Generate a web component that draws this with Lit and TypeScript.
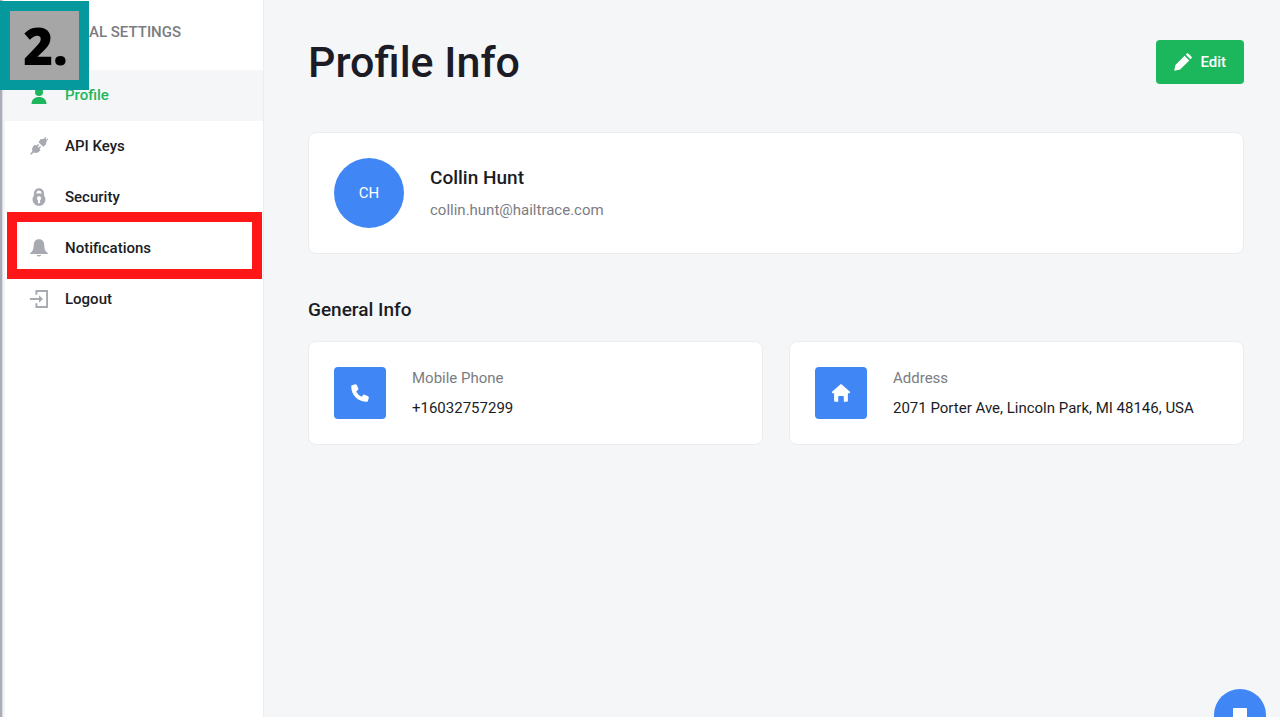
import { LitElement, html, svg, css } from "lit";
import { customElement } from "lit/decorators.js";
import { classMap } from "lit/directives/class-map.js";

const icons = {
  person: svg`<circle cx="9" cy="6" r="4"/><path d="M1.5 18C1.5 13.500 4.9 11 9 11s7.500 2.500 7.500 7z"/>`,
  plug: svg`<path d="M8.600 5.200 L10.300 2.300 L13.400 1.900 L14.200 1.300 L15.600 0 L16.300 0.700 L15.500 2.100 L16.700 2.400 L17.500 1.200 L18 2 L16.600 4.300 L15.900 7.600 L13.200 9.800z"/><path d="M4.800 7.800 L6.600 8.600 L8.200 7 L9.200 8 L7.700 9.600 L8.600 10.500 L10.100 9 L11.100 10 L9.500 11.500 L10.400 13 L8.600 15.300 L5.700 16 L3.700 15.400 L1.300 17.800 L0.200 16.800 L2.400 14.300 L2 12.200 L2.900 9.500z"/>`,
  lock: svg`<path fill-rule="evenodd" d="M3.900 7.400V5.300a5.100 5.100 0 0 1 10.200 0V7.400A6.500 6.500 0 1 1 3.900 7.400zM6.500 5.700a7 7 0 0 1 5 0V5a2.500 2.500 0 0 0-5 0zM9 8.300a2 2 0 0 0-1.100 3.700V15.300h2.200V12A2 2 0 0 0 9 8.300z"/>`,
  bell: svg`<path d="M9 .2c3.700 0 5.200 2.700 5.300 6 .1 3.700.5 5.700 3.500 7.700v1H.2v-1c3-2 3.400-4 3.500-7.700C3.800 2.900 5.300.2 9 .2zM6.700 15.900h4.600A2.400 2.400 0 0 1 6.700 15.900z"/>`,
  logout: svg`<path d="M5.400 4.800V0H18V18H5.400v-4.800h2v2.900h8.700V1.900H7.400v2.900zM0 8.100h9V5.300L13 9l-4 3.700V9.900H0z"/>`,
  pencil: svg`<path d="M.2 17.800l1.200-5.900L10.600 2.700l4.700 4.700-9.200 9.200zM11.700 1.600l.9-.9q1-1 2 0l2.700 2.700q1 1 0 2l-.9.900z"/>`,
  phone: svg`<path d="M1 1.200L4.300.2q1-.2 1.500.7l1.500 3.500q.3.900-.4 1.500L5.200 7.400q1.900 3.700 5.400 5.400l1.500-1.800q.6-.7 1.500-.3l3.500 1.500q.9.500.7 1.500l-.9 3.200q-.3.900-1.200.9C6.800 17.800.2 11.200.2 2.300q0-.9.800-1.100z"/>`,
  home: svg`<path d="M9.700.4l8 7.200q.5.600.2 1.200-.2.500-1 .5h-1V16.500q0 1.200-1.200 1.200h-2.900V12.700q0-.8-.8-.8H7q-.8 0-.8.800v5H3.300q-1.200 0-1.200-1.200V9.300h-1q-.8 0-1-.5-.3-.6.200-1.200l8-7.200q.7-.6 1.400 0z"/>`,
};
type IconName = keyof typeof icons;

const icon = (name: IconName) =>
  html`<svg class="icon" viewBox="0 0 18 18" aria-hidden="true">${icons[name]}</svg>`;

const navItems: { label: string; icon: IconName; active?: boolean; marked?: boolean }[] = [
  { label: "Profile", icon: "person", active: true },
  { label: "API Keys", icon: "plug" },
  { label: "Security", icon: "lock" },
  { label: "Notifications", icon: "bell", marked: true },
  { label: "Logout", icon: "logout" },
];

const details: { label: string; value: string; icon: IconName }[] = [
  { label: "Mobile Phone", value: "+16032757299", icon: "phone" },
  { label: "Address", value: "2071 Porter Ave, Lincoln Park, MI 48146, USA", icon: "home" },
];

@customElement("app-root")
export class AppRoot extends LitElement {
  static styles = css`
    :host {
      display: block;
      position: relative;
      box-sizing: border-box;
      min-height: 100vh;
      padding-bottom: 4px;
      background: #ffffff;
      color: #1b1c25;
      font: 400 15px/20px Roboto, sans-serif;
    }
    * {
      box-sizing: border-box;
    }
    h1, h2, h3, p, ul, dl, dd {
      margin: 0;
      padding: 0;
    }
    .layout {
      position: relative;
      display: flex;
      min-height: calc(100vh - 4px);
      overflow: hidden;
    }
    .sidebar {
      flex: 0 0 264px;
      background: #ffffff;
      border-left: 2px solid #a9adb8;
      border-right: 1px solid #ececee;
      box-shadow: inset 1px 0 #dcdde1, inset 3px 0 #f3f3f5;
      padding-left: 3px;
    }
    .sidebar-title {
      height: 70px;
      padding: 22px 0 0 84px;
      color: #7b7c82;
      font-size: 15px;
      line-height: 20px;
      font-weight: 500;
    }
    .nav {
      list-style: none;
    }
    .nav-item {
      position: relative;
    }
    .nav-link {
      display: flex;
      align-items: center;
      gap: 17px;
      height: 51px;
      padding: 0 0 2px 25px;
      color: #1b1c25;
      font-weight: 500;
      text-decoration: none;
    }
    .nav-link .icon {
      color: #a7aab1;
    }
    .nav-link.active {
      background: #f5f6f8;
    }
    .nav-link.active,
    .nav-link.active .icon {
      color: #1cb65d;
    }
    .marker {
      position: absolute;
      inset: -11px 1px -5px 2px;
      border: 10px solid #ff1616;
      pointer-events: none;
    }
    .icon {
      display: block;
      flex: none;
      width: 18px;
      height: 18px;
      fill: currentColor;
    }
    .main {
      flex: 1;
      min-width: 0;
      padding: 36px 36px 0 44px;
      background: #f5f6f8;
    }
    .header {
      display: flex;
      align-items: center;
      justify-content: space-between;
      margin-bottom: 44px;
    }
    .title {
      font-size: 43px;
      line-height: 52px;
      font-weight: 500;
    }
    .edit {
      display: flex;
      align-items: center;
      gap: 8px;
      height: 44px;
      padding: 0 18px;
      border: 0;
      border-radius: 4px;
      background: #1cb65d;
      color: #ffffff;
      font: 500 15px/20px Roboto, sans-serif;
    }
    .card {
      display: flex;
      align-items: center;
      gap: 26px;
      padding: 25px;
      border: 1px solid #ececee;
      border-radius: 8px;
      background: #ffffff;
    }
    .avatar {
      display: grid;
      place-items: center;
      flex: none;
      width: 70px;
      height: 70px;
      border-radius: 50%;
      background: #4087f5;
      color: #ffffff;
    }
    .name {
      margin-bottom: 10px;
      font-size: 19px;
      line-height: 24px;
      font-weight: 500;
    }
    .muted {
      color: #7b7c82;
    }
    .section-title {
      margin: 44px 0 19px;
      font-size: 19px;
      line-height: 24px;
      font-weight: 500;
    }
    .grid {
      display: grid;
      grid-template-columns: 1fr 1fr;
      gap: 26px;
    }
    .tile {
      display: grid;
      place-items: center;
      flex: none;
      width: 52px;
      height: 52px;
      border-radius: 4px;
      background: #4087f5;
      color: #ffffff;
    }
    .detail {
      display: grid;
      gap: 10px;
    }
    .chat {
      position: absolute;
      right: 14px;
      bottom: -24px;
      width: 52px;
      height: 52px;
      padding: 18px;
      border: 0;
      border-radius: 50%;
      background: #4087f5;
      color: #ffffff;
    }
    .chat-icon {
      display: block;
      width: 16px;
      height: 16px;
      fill: currentColor;
    }
    .step {
      position: absolute;
      top: 1px;
      left: 0;
      display: grid;
      place-items: center;
      width: 89px;
      height: 89px;
      padding-left: 2px;
      border: 10px solid #05999e;
      background: #a6a6a6;
      color: #000000;
      font: 800 51px/69px "Open Sans", sans-serif;
    }
  `;

  render() {
    return html`
      <div class="layout">
        <aside class="sidebar">
          <h2 class="sidebar-title">AL SETTINGS</h2>
          <nav aria-label="Settings">
            <ul class="nav">
              ${navItems.map(
                (item) => html`<li class="nav-item">
                  <a class=${classMap({ "nav-link": true, active: !!item.active })} href="#">
                    ${icon(item.icon)}<span>${item.label}</span>
                  </a>
                  ${item.marked ? html`<span class="marker"></span>` : ""}
                </li>`
              )}
            </ul>
          </nav>
        </aside>
        <main class="main">
          <header class="header">
            <h1 class="title">Profile Info</h1>
            <button class="edit" type="button">${icon("pencil")}<span>Edit</span></button>
          </header>
          <section class="card">
            <div class="avatar">CH</div>
            <div>
              <h3 class="name">Collin Hunt</h3>
              <p class="muted">collin.hunt@hailtrace.com</p>
            </div>
          </section>
          <h2 class="section-title">General Info</h2>
          <div class="grid">
            ${details.map(
              (d) => html`<section class="card">
                <div class="tile">${icon(d.icon)}</div>
                <dl class="detail">
                  <dt class="muted">${d.label}</dt>
                  <dd>${d.value}</dd>
                </dl>
              </section>`
            )}
          </div>
        </main>
        <button class="chat" type="button" aria-label="Chat">
          <svg class="chat-icon" viewBox="0 0 16 16" aria-hidden="true">
            <path d="M2 1h12q1 0 1 1v13l-4-3H2q-1 0-1-1V2q0-1 1-1z" />
          </svg>
        </button>
      </div>
      <div class="step">2.</div>
    `;
  }
}
